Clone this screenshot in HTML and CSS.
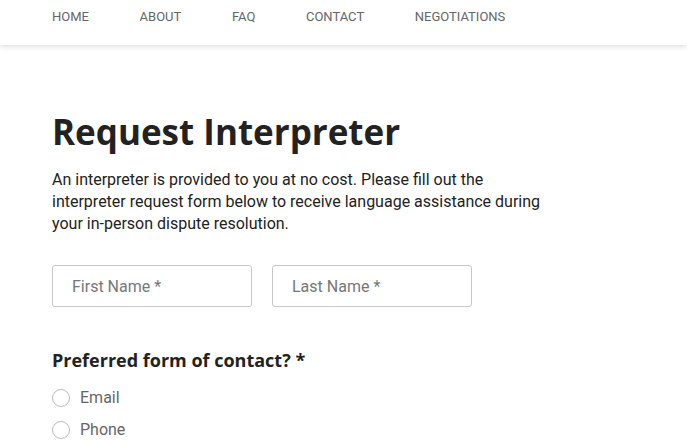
FILE: index.html
```html
<!DOCTYPE html>
<html lang="en">
<head>
<meta charset="utf-8">
<title>Request Interpreter</title>
<link rel="stylesheet" href="styles.css">
</head>
<body>
<header class="topbar">
  <nav class="nav">
    <a href="#">HOME</a>
    <a href="#">ABOUT</a>
    <a href="#">FAQ</a>
    <a href="#">CONTACT</a>
    <a href="#">NEGOTIATIONS</a>
  </nav>
</header>
<main class="content">
  <h1 class="title">Request Interpreter</h1>
  <p class="intro">An interpreter is provided to you at no cost. Please fill out the interpreter request form below to receive language assistance during your in-person dispute resolution.</p>
  <div class="names">
    <input class="field" type="text" placeholder="First Name *">
    <input class="field" type="text" placeholder="Last Name *">
  </div>
  <h2 class="question">Preferred form of contact? *</h2>
  <div class="options">
    <label class="option"><span class="radio"></span>Email</label>
    <label class="option"><span class="radio"></span>Phone</label>
  </div>
</main>
</body>
</html>
```

FILE: styles.css
```css
* { box-sizing: border-box; }
html, body { margin: 0; padding: 0; background: #fff; }
body { font-family: Roboto, "Liberation Sans", sans-serif; color: #222; }
.topbar {
  height: 45px;
  background: #fff;
  box-shadow: 0 2px 5px rgba(0,0,0,0.12);
  padding: 0 52px;
}
.nav {
  display: flex;
  gap: 50.6px;
  padding-top: 10px;
}
.nav a {
  font-size: 13px;
  color: #666;
  text-decoration: none;
  line-height: 14px;
}
.content { padding: 65px 52px 0; }
.title {
  font-family: "Open Sans", sans-serif;
  font-weight: 700;
  font-size: 35px;
  line-height: 44px;
  margin: 0 0 15px;
  color: #222;
}
.intro {
  font-size: 16px;
  line-height: 22px;
  margin: 0;
  max-width: 500px;
  color: #222;
}
.names {
  display: flex;
  gap: 20px;
  margin-top: 30px;
}
.field {
  width: 200px;
  height: 42px;
  border: 1px solid #c8c8c8;
  border-radius: 3px;
  padding: 0 19px;
  font-family: Roboto, sans-serif;
  font-size: 16px;
  color: #333;
  outline: none;
}
.field::placeholder { color: #777; }
.question {
  font-family: "Open Sans", sans-serif;
  font-weight: 700;
  font-size: 18px;
  line-height: 24px;
  margin: 41px 0 0;
  color: #222;
}
.options {
  display: flex;
  flex-direction: column;
  gap: 10px;
  margin-top: 15px;
}
.option {
  display: flex;
  align-items: center;
  gap: 10px;
  font-size: 16px;
  line-height: 22px;
  color: #666;
}
.radio {
  width: 18px;
  height: 18px;
  border: 1px solid #bbb;
  border-radius: 50%;
  background: #fff;
}
```
